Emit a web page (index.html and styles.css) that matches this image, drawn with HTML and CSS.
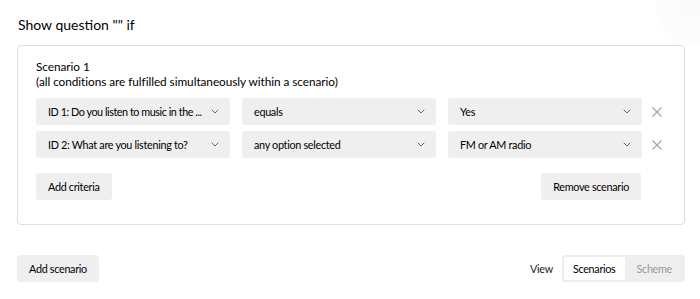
FILE: index.html
```html
<!DOCTYPE html>
<html lang="en">
<head>
  <meta charset="UTF-8">
  <meta name="viewport" content="width=device-width, initial-scale=1.0">
  <title>Show question</title>
  <link rel="stylesheet" href="styles.css">
</head>
<body>
  <div class="glow"></div>
  <div class="page">
    <h1 class="title">Show question "" if</h1>

    <div class="scenario">
      <div class="scenario-head">
        <div>Scenario 1</div>
        <div>(all conditions are fulfilled simultaneously within a scenario)</div>
      </div>

      <div class="rows">
        <div class="row">
          <div class="select"><span class="select-text long">ID 1: Do you listen to music in the ...</span><svg class="chevron" viewBox="0 0 8 5"><path d="M.7.7L4 4 7.3.7"/></svg></div>
          <div class="select"><span class="select-text">equals</span><svg class="chevron" viewBox="0 0 8 5"><path d="M.7.7L4 4 7.3.7"/></svg></div>
          <div class="select"><span class="select-text">Yes</span><svg class="chevron" viewBox="0 0 8 5"><path d="M.7.7L4 4 7.3.7"/></svg></div>
          <button class="remove"><svg viewBox="0 0 10 10"><path d="M.5.5l9 9M9.5.5l-9 9"/></svg></button>
        </div>
        <div class="row">
          <div class="select"><span class="select-text">ID 2: What are you listening to?</span><svg class="chevron" viewBox="0 0 8 5"><path d="M.7.7L4 4 7.3.7"/></svg></div>
          <div class="select"><span class="select-text">any option selected</span><svg class="chevron" viewBox="0 0 8 5"><path d="M.7.7L4 4 7.3.7"/></svg></div>
          <div class="select"><span class="select-text">FM or AM radio</span><svg class="chevron" viewBox="0 0 8 5"><path d="M.7.7L4 4 7.3.7"/></svg></div>
          <button class="remove"><svg viewBox="0 0 10 10"><path d="M.5.5l9 9M9.5.5l-9 9"/></svg></button>
        </div>
      </div>

      <div class="scenario-actions">
        <button class="btn">Add criteria</button>
        <button class="btn">Remove scenario</button>
      </div>
    </div>

    <div class="footer">
      <button class="btn">Add scenario</button>
      <div class="view">
        <span class="view-label">View</span>
        <div class="switch">
          <span class="switch-item active">Scenarios</span>
          <span class="switch-item">Scheme</span>
        </div>
      </div>
    </div>
  </div>
</body>
</html>
```

FILE: styles.css
```css
* {
  box-sizing: border-box;
  margin: 0;
  padding: 0;
}

body {
  font-family: Lato, sans-serif;
  font-size: 10.8px;
  letter-spacing: -0.3px;
  color: #000;
  background: #fff;
  width: 700px;
  height: 299px;
  overflow: hidden;
  position: relative;
}

.glow {
  position: absolute;
  top: -35px;
  right: -35px;
  width: 80px;
  height: 80px;
  border-radius: 50%;
  background: radial-gradient(circle, #fafafa 0%, #fcfcfc 60%, #fff 100%);
}

.page {
  position: relative;
  padding: 16px 15px 0 17px;
}

.title {
  font-size: 14px;
  font-weight: 400;
  letter-spacing: 0;
  line-height: 18px;
  padding-left: 1px;
}

.scenario {
  margin-top: 11px;
  width: 668px;
  border: 1px solid #dedede;
  border-radius: 4px;
  padding: 13px 18px 24px 18px;
}

.scenario-head {
  font-size: 11.8px;
  letter-spacing: -0.05px;
  line-height: 15px;
}

.rows {
  margin-top: 9px;
  display: flex;
  flex-direction: column;
  gap: 6px;
}

.row {
  display: flex;
  align-items: center;
  gap: 12px;
}

.select {
  width: 194px;
  flex: none;
  height: 27px;
  background: #efefef;
  border-radius: 3px;
  display: flex;
  align-items: center;
  justify-content: space-between;
  padding: 0 11px 0 12px;
}

.select-text {
  white-space: nowrap;
}

.select-text.long {
  letter-spacing: -0.45px;
}

.chevron {
  width: 8px;
  height: 5px;
  fill: none;
  stroke: #666;
  stroke-width: 1;
  flex: none;
  margin-left: 4px;
}

.remove {
  border: none;
  background: none;
  width: 10px;
  height: 10px;
  margin-left: -2px;
  display: flex;
  align-items: center;
  justify-content: center;
}

.remove svg {
  width: 10px;
  height: 10px;
  fill: none;
  stroke: #a3a3a3;
  stroke-width: 1.1;
}

.scenario-actions {
  margin-top: 15px;
  width: 605px;
  display: flex;
  justify-content: space-between;
}

.btn {
  font-family: Lato, sans-serif;
  font-size: 10.8px;
  letter-spacing: -0.3px;
  color: #000;
  background: #efefef;
  border: none;
  border-radius: 3px;
  height: 27px;
  padding: 0 12px;
}

.footer {
  margin-top: 30px;
  width: 668px;
  display: flex;
  justify-content: space-between;
  align-items: center;
}

.view {
  display: flex;
  align-items: center;
  gap: 9px;
}

.view-label {
  color: #222;
}

.switch {
  display: flex;
  background: #eee;
  border-radius: 3px;
  padding: 2px;
  height: 27px;
}

.switch-item {
  display: flex;
  align-items: center;
  padding: 0 11px 0 12px;
  color: #999;
}

.switch-item.active {
  background: #fff;
  color: #000;
  border-radius: 2px;
  padding: 0 9px;
}
```
